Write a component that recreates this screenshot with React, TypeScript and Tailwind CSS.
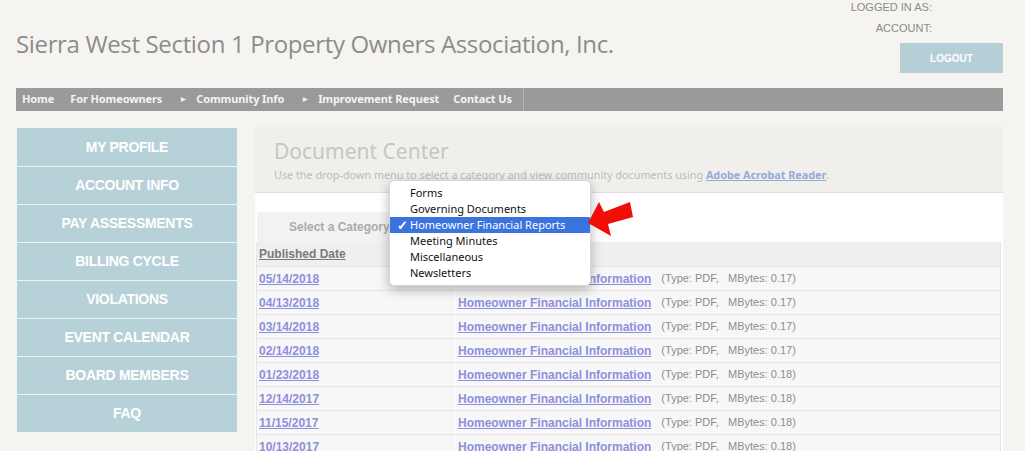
import React from 'react';

const navItems = [
  { label: 'Home', gap: 'mr-[16px]', arrow: false },
  { label: 'For Homeowners', gap: 'mr-[10px]', arrow: true },
  { label: 'Community Info', gap: 'mr-[10px]', arrow: true },
  { label: 'Improvement Request', gap: 'mr-[14px]', arrow: false },
  { label: 'Contact Us', gap: 'mr-0', arrow: false },
];

const sideItems = [
  'MY PROFILE',
  'ACCOUNT INFO',
  'PAY ASSESSMENTS',
  'BILLING CYCLE',
  'VIOLATIONS',
  'EVENT CALENDAR',
  'BOARD MEMBERS',
  'FAQ',
];

const docs = [
  { date: '05/14/2018', size: '0.17' },
  { date: '04/13/2018', size: '0.17' },
  { date: '03/14/2018', size: '0.17' },
  { date: '02/14/2018', size: '0.17' },
  { date: '01/23/2018', size: '0.18' },
  { date: '12/14/2017', size: '0.18' },
  { date: '11/15/2017', size: '0.18' },
  { date: '10/13/2017', size: '0.18' },
];

const categories = [
  'Forms',
  'Governing Documents',
  'Homeowner Financial Reports',
  'Meeting Minutes',
  'Miscellaneous',
  'Newsletters',
];

export default function App() {
  return (
    <div className="w-[1025px] h-[451px] overflow-hidden bg-[#f5f4f1] font-['Liberation_Sans',Arial,sans-serif]">
      {/* Header */}
      <div className="flex justify-between items-start pl-4 pr-[22px] h-[88px]">
        <h1 className="pt-[29px] text-[24px] leading-[30px] tracking-[-0.35px] text-[#8c8c8c] font-['Open_Sans',sans-serif]">
          Sierra West Section 1 Property Owners Association, Inc.
        </h1>
        <div className="flex flex-col items-end">
          <div className="mr-[71px] -mt-[3px] flex flex-col items-end text-[11px] leading-[21px] text-[#8a8a8a]">
            <span>LOGGED IN AS:</span>
            <span>ACCOUNT:</span>
          </div>
          <button className="mt-[4px] w-[103px] h-[30px] bg-[#b6cfd7] text-white text-[10px] font-bold">
            LOGOUT
          </button>
        </div>
      </div>

      {/* Nav */}
      <div className="ml-4 mr-[22px] h-[23px] bg-[#9a9a9a] flex items-center">
        <div className="flex items-center h-full pl-[6px] pr-[11px] border-r border-[#b4b4b4] text-[11px] tracking-[-0.1px] font-bold text-[#f4f4f4] font-['Noto_Sans',sans-serif]">
          {navItems.map((n) => (
            <div key={n.label} className={`flex items-center ${n.gap}`}>
              <span>{n.label}</span>
              {n.arrow && <span className="ml-[19px] text-[6px] text-[#eeeeee]">▶</span>}
            </div>
          ))}
        </div>
      </div>

      {/* Main */}
      <div className="flex mt-[16px]">
        <div className="ml-[17px] w-[220px] flex flex-col mt-[1px] shrink-0">
          {sideItems.map((s, i) => (
            <div
              key={s}
              className={`h-[38px] flex items-center justify-center bg-[#b7d1d8] text-white font-bold text-[14px] tracking-[-0.3px] ${
                i > 0 ? 'border-t border-[#eef4f5]' : ''
              }`}
            >
              {s}
            </div>
          ))}
        </div>

        <div className="relative ml-[18px] w-[748px]">
          {/* Title block */}
          <div className="h-[66px] bg-[#f1efeb] border-b border-[#e2e0dc] pl-[19px] pt-[11px]">
            <div className="text-[21px] leading-[26px] text-[#c6c6c6] font-['Noto_Sans',sans-serif]">Document Center</div>
            <div className="mt-[3px] text-[10.8px] text-[#bbbbbb] font-['Noto_Sans',sans-serif]">
              Use the drop-down menu to select a category and view community documents using{' '}
              <span className="font-bold text-[#93abd8] underline">Adobe Acrobat Reader</span>.
            </div>
          </div>

          <div className="bg-white pt-[19px] pr-[2px]">
            <div className="ml-[2px] w-[200px] h-[30px] bg-[#f2f2f2] flex items-center pl-[32px] text-[12px] font-bold text-[#ababab]">
              Select a Category
            </div>

            {/* Table */}
            <div className="ml-[1px] border-r border-l border-[#e6e6e6]">
              <div className="grid grid-cols-[199px_1fr] h-[24px] bg-[#efefef] text-[12px] font-bold">
                <div className="flex items-center pl-[2px] text-[#7a7a7a] underline border-r border-[#f8f8f8]">Published Date</div>
                <div className="flex items-center pl-[28px] text-[#c9c9c9]">Document</div>
              </div>
              {docs.map((d) => (
                <div key={d.date} className="grid grid-cols-[199px_1fr] h-[24px] bg-[#f7f7f7] border-t border-[#e6e6e6] text-[12px]">
                  <div className="flex items-center pl-[2px] border-r border-[#fdfdfd] font-bold text-[#8d8fdb] underline">
                    {d.date}
                  </div>
                  <div className="flex items-center pl-[2px] text-[#8d8d8d]">
                    <span className="font-bold text-[#8d8fdb] underline">Homeowner Financial Information</span>
                    <span className="ml-[10px] text-[11px] whitespace-pre">(Type: PDF,   MBytes: {d.size})</span>
                  </div>
                </div>
              ))}
            </div>
          </div>

          {/* Dropdown menu */}
          <div className="absolute left-[134px] top-[53px] w-[202px] h-[106px] bg-white rounded-[5px] border border-[#d6d6d6] shadow-[0_4px_12px_rgba(0,0,0,0.28)] pt-[4px] text-[11px] text-[#111] font-['Noto_Sans',sans-serif]">
            {categories.map((c) => {
              const active = c === 'Homeowner Financial Reports';
              return (
                <div
                  key={c}
                  className={`relative h-[16px] leading-[16px] pl-[20px] ${active ? 'bg-[#3b74df] text-white' : ''}`}
                >
                  {active && <span className="absolute left-[7px] top-0 text-[13px] font-bold">✓</span>}
                  {c}
                </div>
              );
            })}
          </div>

          {/* Red arrow */}
          <svg className="absolute left-[331px] top-[72px]" width="50" height="40" viewBox="0 0 50 40">
            <polygon points="2,24 13,3 18,13 44,3 47,18 22,25 25,37" fill="#f20d06" />
          </svg>
        </div>
      </div>
    </div>
  );
}
